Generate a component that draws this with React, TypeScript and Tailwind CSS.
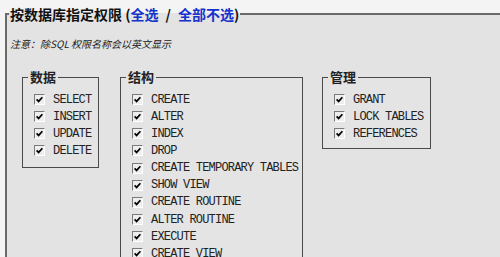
const data = ["SELECT", "INSERT", "UPDATE", "DELETE"];
const structure = [
  "CREATE",
  "ALTER",
  "INDEX",
  "DROP",
  "CREATE TEMPORARY TABLES",
  "SHOW VIEW",
  "CREATE ROUTINE",
  "ALTER ROUTINE",
  "EXECUTE",
  "CREATE VIEW",
];
const admin = ["GRANT", "LOCK TABLES", "REFERENCES"];

function Check() {
  return (
    <span className="flex h-[11px] w-[11px] shrink-0 items-center justify-center border border-t-[#7a7a7a] border-r-[#ffffff] border-b-[#ffffff] border-l-[#7a7a7a] bg-[#eeeeee]">
      <svg width="7" height="7" viewBox="0 0 7 7">
        <path d="M0.6 3.4 L2.6 5.4 L6.4 1.2" stroke="#000" strokeWidth="1.7" fill="none" />
      </svg>
    </span>
  );
}

function Group({ title, items, width, pb }: { title: string; items: string[]; width: string; pb: string }) {
  return (
    <fieldset className={`${width} border border-[#4a4a4a] bg-[#e4e4e4]`}>
      <legend className="ml-[5px] px-[2px] text-[13px] leading-[16px] font-bold text-[#222]">{title}</legend>
      <div className={`pt-[6px] pl-[11px] ${pb}`}>
        {items.map((item) => (
          <div key={item} className="flex h-[17.15px] items-center">
            <Check />
            <span className="ml-[8px] whitespace-pre font-['Liberation_Mono',monospace] text-[12px] tracking-[-0.8px] text-[#222]">
              {item}
            </span>
          </div>
        ))}
      </div>
    </fieldset>
  );
}

export default function App() {
  return (
    <div className="h-[257px] w-[500px] overflow-hidden bg-[#f4f4f4] pt-[5px] font-['Noto_Sans_CJK_SC','Noto_Sans',sans-serif]">
      <fieldset className="ml-[5px] w-[540px] border-2 border-[#6a6a6a] bg-[#e3e3e3] pb-[20px]">
        <legend className="ml-[2px] px-[1px] text-[14px] leading-[18px] font-bold text-[#111]">
          按数据库指定权限 (<span className="text-[#1533cc]">全选</span>
          <span className="mx-[7px]">/</span>
          <span className="text-[#1533cc]">全部不选</span>)
        </legend>
        <p className="mt-[15px] pl-[3px] text-[10px] leading-[12px] italic text-[#222]">
          注意：除SQL 权限名称会以英文显示
        </p>
        <div className="mt-[19px] flex items-start pl-[15px]">
          <Group title="数据" items={data} width="w-[77px]" pb="pb-[7px]" />
          <div className="ml-[21px]">
            <Group title="结构" items={structure} width="w-[183px]" pb="pb-[10px]" />
          </div>
          <div className="ml-[19px]">
            <Group title="管理" items={admin} width="w-[109px]" pb="pb-[6px]" />
          </div>
        </div>
      </fieldset>
    </div>
  );
}
